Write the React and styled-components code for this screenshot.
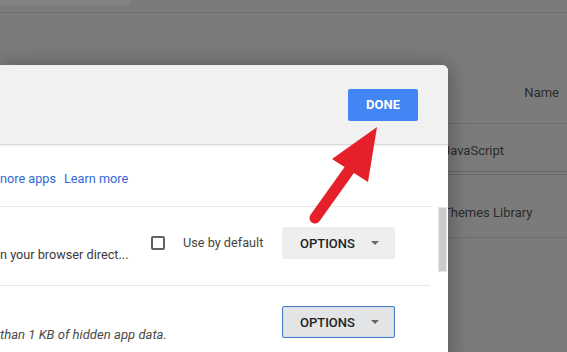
import React from "react";
import styled, { createGlobalStyle } from "styled-components";

const GlobalStyle = createGlobalStyle`
  html, body {
    margin: 0;
    padding: 0;
    background: #7b7b7b;
    font-family: Roboto, "Liberation Sans", sans-serif;
    overflow: hidden;
  }
`;

const Page = styled.div`
  position: relative;
  width: 567px;
  height: 352px;
  overflow: hidden;
  background: #7b7b7b;
  display: flex;
  flex-direction: column;
`;

const TopBar = styled.div`
  height: 13px;
  border-bottom: 1px solid #6c6c6c;
  box-sizing: border-box;
`;

const TopTab = styled.div`
  width: 130px;
  height: 5px;
  background: #838383;
`;

const Table = styled.div`
  margin-left: 443px;
  display: flex;
  flex-direction: column;
  color: #2b2b2b;
  font-size: 13px;
`;

const HeadRow = styled.div`
  height: 110px;
  box-sizing: border-box;
  display: flex;
  align-items: flex-end;
  justify-content: flex-end;
  padding: 0 8px 22px 0;
  line-height: 16px;
`;

const BodyRow = styled.div`
  height: ${(p) => p.$height}px;
  box-sizing: border-box;
  border-top: ${(p) => (p.$double ? "4px double #6b6b6b" : "1px solid #6e6e6e")};
  padding-top: ${(p) => p.$top}px;
  line-height: 16px;
  white-space: nowrap;
`;

const TableEnd = styled.div`
  border-top: 1px solid #6e6e6e;
`;

const Dialog = styled.div`
  position: absolute;
  left: 0;
  top: 65px;
  width: 448px;
  height: 300px;
  background: #fff;
  border-top-right-radius: 6px;
  box-shadow: 0 2px 22px rgba(0, 0, 0, 0.35);
  display: flex;
  flex-direction: column;
  overflow: hidden;
`;

const Header = styled.div`
  height: 80px;
  flex-shrink: 0;
  box-sizing: border-box;
  background: #f1f1f1;
  border-bottom: 1px solid #d9d9d9;
  box-shadow: 0 1px 2px rgba(0, 0, 0, 0.08);
  display: flex;
  align-items: center;
  justify-content: flex-end;
  padding-right: 30px;
`;

const DoneButton = styled.button`
  width: 70px;
  height: 32px;
  border: none;
  border-radius: 2px;
  background: #4285f4;
  color: #fff;
  font-family: Roboto, "Liberation Sans", sans-serif;
  font-weight: 700;
  font-size: 13px;
  padding: 0;
`;

const LinksRow = styled.div`
  height: 62px;
  flex-shrink: 0;
  box-sizing: border-box;
  margin-right: 16px;
  border-bottom: 1px solid #e6e6e6;
  display: flex;
  align-items: center;
  gap: 8px;
  padding-top: 6px;
  font-size: 12.7px;
  line-height: 16px;
`;

const Link = styled.a`
  color: #3367d6;
  text-decoration: none;
`;

const ScrollArea = styled.div`
  flex: 1;
  display: flex;
`;

const List = styled.div`
  flex: 1;
  display: flex;
  flex-direction: column;
`;

const Row = styled.div`
  height: ${(p) => p.$height}px;
  box-sizing: border-box;
  margin-right: ${(p) => p.$lineEnd}px;
  border-bottom: ${(p) => (p.$last ? "none" : "1px solid #e8e8e8")};
  display: flex;
  align-items: flex-start;
  font-size: 12.7px;
  line-height: 16px;
  color: #3a3a3a;
`;

const Desc = styled.div`
  width: 151px;
  flex-shrink: 0;
  margin-top: ${(p) => p.$top}px;
  white-space: nowrap;
  font-style: ${(p) => (p.$italic ? "italic" : "normal")};
  font-size: ${(p) => (p.$italic ? "13.1px" : "12.7px")};
  color: ${(p) => (p.$italic ? "#4a4a4a" : "#3a3a3a")};
`;

const CheckLabel = styled.label`
  display: flex;
  align-items: center;
  gap: 18px;
  margin-top: 28px;
  color: #444;
`;

const Box = styled.span`
  width: 14px;
  height: 14px;
  box-sizing: border-box;
  border: 2px solid #5f6368;
  border-radius: 2px;
`;

const OptionsButton = styled.button`
  margin-left: auto;
  margin-top: ${(p) => p.$top}px;
  margin-right: ${(p) => p.$right}px;
  width: 113px;
  height: 32px;
  box-sizing: border-box;
  border-radius: 2px;
  border: ${(p) => (p.$focused ? "1px solid #4a7cc4" : "none")};
  box-shadow: ${(p) => (p.$focused ? "inset 0 0 0 1px #d2def0" : "none")};
  background: ${(p) => (p.$focused ? "#e3e4e6" : "#eeeeee")};
  display: flex;
  align-items: center;
  padding: 0 0 0 ${(p) => (p.$focused ? 17 : 18)}px;
  font-family: Roboto, "Liberation Sans", sans-serif;
  font-weight: 500;
  font-size: 13px;
  color: #222;
  gap: 16px;
`;

const Caret = styled.span`
  width: 0;
  height: 0;
  border-left: 4px solid transparent;
  border-right: 4px solid transparent;
  border-top: 4px solid #666;
`;

const Track = styled.div`
  width: 9px;
  padding-right: 1px;
  display: flex;
  flex-direction: column;
`;

const Thumb = styled.div`
  height: 65px;
  background: #cbcbcb;
  border: 1px solid #e6e6e6;
  box-sizing: border-box;
`;

const ArrowLayer = styled.svg`
  position: absolute;
  left: 0;
  top: 0;
  pointer-events: none;
`;

export default function App() {
  return (
    <>
      <GlobalStyle />
      <Page>
        <TopBar>
          <TopTab />
        </TopBar>
        <Table>
          <HeadRow>Name</HeadRow>
          <BodyRow $height={48} $top={19}>JavaScript</BodyRow>
          <BodyRow $height={66} $double $top={30}>Themes Library</BodyRow>
          <TableEnd />
        </Table>

        <Dialog>
          <Header>
            <DoneButton>DONE</DoneButton>
          </Header>
          <LinksRow>
            <Link href="#">nore apps</Link>
            <Link href="#">Learn more</Link>
          </LinksRow>
          <ScrollArea>
            <List>
              <Row $height={79} $lineEnd={8}>
                <Desc $top={40}>n your browser direct...</Desc>
                <CheckLabel>
                  <Box />
                  Use by default
                </CheckLabel>
                <OptionsButton $top={20} $right={35}>
                  OPTIONS
                  <Caret />
                </OptionsButton>
              </Row>
              <Row $height={80} $lineEnd={0} $last>
                <Desc $top={41} $italic>
                  than 1 KB of hidden app data.
                </Desc>
                <OptionsButton $top={20} $right={43} $focused>
                  OPTIONS
                  <Caret />
                </OptionsButton>
              </Row>
            </List>
            <Track>
              <Thumb />
            </Track>
          </ScrollArea>
        </Dialog>

        <ArrowLayer width="567" height="352" viewBox="0 0 567 352">
          <line
            x1="315"
            y1="218"
            x2="350"
            y2="169"
            stroke="#e5202a"
            strokeWidth="11"
            strokeLinecap="round"
          />
          <polygon points="377,127 332,159 368,182" fill="#e5202a" />
        </ArrowLayer>
      </Page>
    </>
  );
}
